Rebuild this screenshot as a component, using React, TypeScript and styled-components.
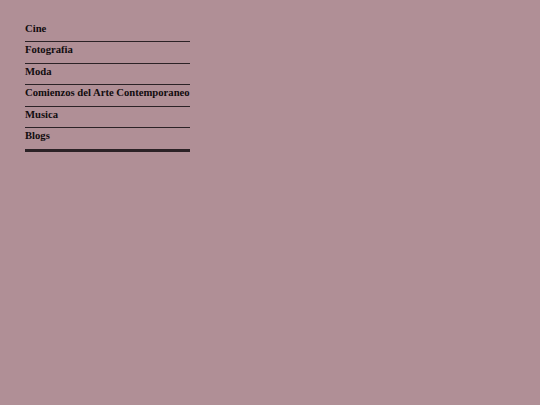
import React from "react";
import styled, { createGlobalStyle } from "styled-components";

const Global = createGlobalStyle`
  html, body { margin: 0; padding: 0; background: #b08f96; }
  body { font-family: "Liberation Serif", "Times New Roman", serif; }
`;

const Page = styled.div`
  padding: 20.5px 0 0 25px;
`;

const Menu = styled.ul`
  display: inline-block;
  list-style: none;
  margin: 0;
  padding: 0;
`;

const Item = styled.li<{ $last?: boolean }>`
  font-size: 10.65px;
  font-weight: bold;
  line-height: 14px;
  color: #100c0e;
  padding: 1px 0 5.5px;
  border-bottom: ${(p) => (p.$last ? "3px" : "1px")} solid #2b2226;
  white-space: nowrap;
`;

const items = ["Cine", "Fotografia", "Moda", "Comienzos del Arte Contemporaneo", "Musica", "Blogs"];

export default function App() {
  return (
    <>
      <Global />
      <Page>
        <Menu>
          {items.map((t, i) => (
            <Item key={t} $last={i === items.length - 1}>{t}</Item>
          ))}
        </Menu>
      </Page>
    </>
  );
}
